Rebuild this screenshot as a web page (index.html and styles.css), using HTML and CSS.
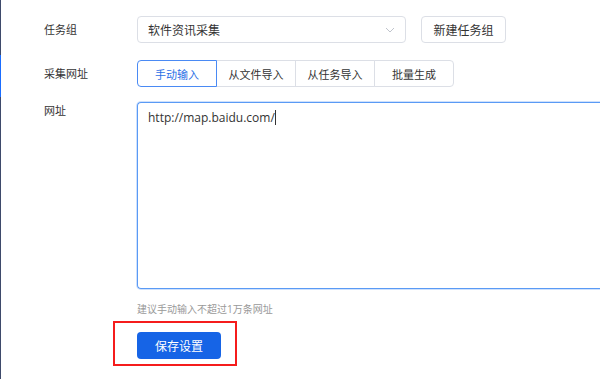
FILE: index.html
```html
<!DOCTYPE html>
<html lang="zh-CN">
<head>
  <meta charset="UTF-8">
  <title>采集设置</title>
  <link rel="stylesheet" href="styles.css">
</head>
<body>
  <div class="page">
    <div class="sidebar"><div class="sidebar-active"></div></div>

    <div class="form">
      <div class="row row-group">
        <div class="label">任务组</div>
        <div class="field">
          <div class="select">
            <span>软件资讯采集</span>
            <svg class="arrow" width="10" height="6" viewBox="0 0 10 6"><path d="M1 1l4 4 4-4" fill="none" stroke="#c0c4cc" stroke-width="1"/></svg>
          </div>
          <button class="btn">新建任务组</button>
        </div>
      </div>

      <div class="row row-source">
        <div class="label">采集网址</div>
        <div class="field">
          <div class="tabs">
            <button class="tab active">手动输入</button>
            <button class="tab">从文件导入</button>
            <button class="tab">从任务导入</button>
            <button class="tab">批量生成</button>
          </div>
        </div>
      </div>

      <div class="row row-url">
        <div class="label">网址</div>
        <div class="field field-col">
          <div class="textarea">http://map.baidu.com/<span class="caret"></span></div>
          <div class="hint">建议手动输入不超过1万条网址</div>
          <div class="save-box">
            <button class="btn-primary">保存设置</button>
          </div>
        </div>
      </div>
    </div>
  </div>
</body>
</html>
```

FILE: styles.css
```css
body {
  margin: 0;
  background: #fff;
  font-family: "Open Sans", "Noto Sans CJK SC", sans-serif;
  color: #333;
}
.page {
  display: flex;
  height: 379px;
  overflow: hidden;
}
.sidebar {
  width: 1px;
  flex-shrink: 0;
  background: #3e4a6b;
  padding-top: 55px;
}
.sidebar-active {
  height: 42px;
  background: #1a6dff;
}
.form {
  flex: 1;
  padding: 16px 0 0 43px;
}
.row {
  display: flex;
}
.label {
  width: 93px;
  flex-shrink: 0;
  font-size: 11px;
  color: #333;
  line-height: 27px;
}
.field {
  display: flex;
  align-items: center;
}
.field-col {
  flex-direction: column;
  align-items: flex-start;
  flex: 1;
}
.select {
  box-sizing: border-box;
  width: 269px;
  height: 27px;
  border: 1px solid #dcdfe6;
  border-radius: 4px;
  display: flex;
  align-items: center;
  justify-content: space-between;
  padding: 0 10px;
  font-size: 12px;
  color: #333;
}
.btn {
  margin-left: 15px;
  height: 27px;
  width: 85px;
  border: 1px solid #dcdfe6;
  border-radius: 4px;
  background: #fff;
  font-family: inherit;
  font-size: 12px;
  color: #333;
  padding: 0;
}
.row-source {
  margin-top: 17px;
}
.tabs {
  display: flex;
}
.tab {
  width: 80px;
  height: 27px;
  border: 1px solid #dcdfe6;
  margin-left: -1px;
  background: #fff;
  font-family: inherit;
  font-size: 11px;
  color: #333;
  padding: 0;
}
.tab:first-child {
  margin-left: 0;
  border-radius: 4px 0 0 4px;
}
.tab:last-child {
  border-radius: 0 4px 4px 0;
}
.tab.active {
  border-color: #4a8af4;
  color: #2b6fe6;
  position: relative;
}
.row-url {
  margin-top: 15px;
}
.row-url .label {
  line-height: 16px;
  padding-top: 1px;
}
.textarea {
  align-self: stretch;
  box-sizing: border-box;
  height: 187px;
  border: 1px solid #5a9af5;
  border-right: none;
  border-radius: 4px 0 0 4px;
  box-shadow: 0 0 0 1px #cfe1fc;
  padding: 6px 10px;
  font-size: 12px;
  line-height: 18px;
}
.caret {
  display: inline-block;
  width: 1px;
  height: 15px;
  background: #333;
  vertical-align: -3px;
}
.hint {
  margin-top: 12px;
  font-size: 10px;
  color: #999;
}
.save-box {
  margin: 5px 0 0 -24px;
  border: 2px solid #f51c1c;
  padding: 9px 14px 5px 22px;
}
.btn-primary {
  width: 84px;
  height: 27px;
  border: none;
  border-radius: 4px;
  background: #1664e6;
  color: #fff;
  font-family: inherit;
  font-size: 12px;
  padding: 0;
}
```
